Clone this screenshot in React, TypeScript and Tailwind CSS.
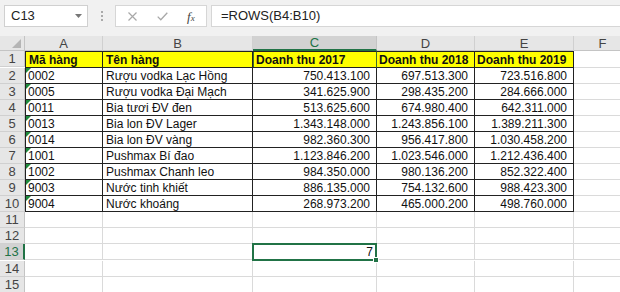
import React from 'react'

const rows = [
  ['0002', 'Rượu vodka Lạc Hồng', '750.413.100', '697.513.300', '723.516.800'],
  ['0005', 'Rượu vodka Đại Mạch', '341.625.900', '298.435.200', '284.666.000'],
  ['0011', 'Bia tươi ĐV đen', '513.625.600', '674.980.400', '642.311.000'],
  ['0013', 'Bia lon ĐV Lager', '1.343.148.000', '1.243.856.100', '1.389.211.300'],
  ['0014', 'Bia lon ĐV vàng', '982.360.300', '956.417.800', '1.030.458.200'],
  ['1001', 'Pushmax Bí đao', '1.123.846.200', '1.023.546.000', '1.212.436.400'],
  ['1002', 'Pushmax Chanh leo', '984.350.000', '980.136.200', '852.322.400'],
  ['9003', 'Nước tinh khiết', '886.135.000', '754.132.600', '988.423.300'],
  ['9004', 'Nước khoáng', '268.973.200', '465.000.200', '498.760.000'],
]

const cols = ['A', 'B', 'C', 'D', 'E', 'F']
const grid = 'grid grid-cols-[25px_78px_150px_124px_98px_99px_58px]'

function RowHead({ n, active }: { n: number; active?: boolean }) {
  return (
    <div
      className={
        active
          ? 'h-[16px] bg-[#d2d2d2] border-r-2 border-r-[#217346] border-b border-b-[#d0d0d0] flex items-center justify-center text-[13px] leading-none text-[#217346]'
          : 'h-[16px] bg-[#e6e6e6] border-r border-r-[#c4c4c4] border-b border-b-[#d0d0d0] flex items-center justify-center text-[13px] leading-none text-[#444]'
      }
    >
      {n}
    </div>
  )
}

function Blank() {
  return <div className="h-[16px] border-r border-b border-[#dadada]" />
}

export default function App() {
  return (
    <div className="w-[620px] h-[292px] overflow-hidden bg-white font-['Liberation_Sans',Arial,sans-serif] text-[#111]">
      {/* formula bar */}
      <div className="h-[36px] bg-[#f1f1f1] flex items-start pt-[5px]">
        <div className="ml-[4px] w-[84px] h-[22px] bg-white border border-[#d0d0d0] flex items-center justify-between pl-[6px] pr-[5px]">
          <span className="text-[13px] text-[#222]">C13</span>
          <svg width="7" height="4" viewBox="0 0 7 4"><polygon points="0,0 7,0 3.5,4" fill="#777" /></svg>
        </div>
        <div className="ml-[13px] mt-[6px] flex flex-col gap-[2px]">
          <span className="w-[2px] h-[2px] bg-[#aaa]" />
          <span className="w-[2px] h-[2px] bg-[#aaa]" />
          <span className="w-[2px] h-[2px] bg-[#aaa]" />
        </div>
        <div className="ml-[12px] w-[92px] h-[22px] bg-white border border-[#d6d6d6] flex items-center">
          <svg className="ml-[12px]" width="9" height="9" viewBox="0 0 9 9">
            <path d="M0.5 0.5L8.5 8.5M8.5 0.5L0.5 8.5" stroke="#a8a8a8" strokeWidth="1.2" />
          </svg>
          <svg className="ml-[20px]" width="11" height="9" viewBox="0 0 11 9">
            <path d="M0.7 4.6L3.8 7.8L10.3 0.8" stroke="#a8a8a8" strokeWidth="1.3" fill="none" />
          </svg>
          <span className="ml-[19px] font-['Liberation_Serif',serif] italic text-[13px] text-[#444] leading-none">
            f<span className="text-[9px]">x</span>
          </span>
        </div>
        <div className="ml-[4px] flex-1 h-[22px] bg-white border border-r-0 border-[#d6d6d6] flex items-center pl-[9px]">
          <span className="text-[13px] text-[#222]">=ROWS(B4:B10)</span>
        </div>
      </div>

      {/* column headers */}
      <div className={grid}>
        <div className="h-[15px] bg-[#e6e6e6] border-r border-b border-[#c4c4c4] flex items-end justify-end pr-[3px] pb-[2px]">
          <svg width="9" height="9" viewBox="0 0 9 9"><polygon points="9,0 9,9 0,9" fill="#b5b5b5" /></svg>
        </div>
        {cols.map((c) =>
          c === 'C' ? (
            <div key={c} className="h-[15px] bg-[#d2d2d2] border-r border-r-[#c4c4c4] border-b-2 border-b-[#217346] flex items-center justify-center text-[13px] leading-none text-[#217346]">
              {c}
            </div>
          ) : (
            <div key={c} className="h-[15px] bg-[#e6e6e6] border-r border-r-[#d0d0d0] border-b border-b-[#c4c4c4] flex items-center justify-center text-[13px] leading-none text-[#444]">
              {c}
            </div>
          )
        )}
      </div>

      {/* row 1 */}
      <div className={grid}>
        <RowHead n={1} />
        <div className="h-[17px] bg-[#ffff00] border border-[#222] px-[3px] flex items-center text-[12px] font-bold">Mã hàng</div>
        <div className="h-[17px] bg-[#ffff00] border-y border-r border-[#222] px-[3px] flex items-center text-[12px] font-bold">Tên hàng</div>
        <div className="h-[17px] bg-[#ffff00] border-y border-r border-y-[#222] border-r-[#3d6b2f] shadow-[inset_1px_0_0_#3d6b2f] px-[3px] flex items-center text-[12px] font-bold">Doanh thu 2017</div>
        <div className="h-[17px] bg-[#ffff00] border-y border-r border-[#222] px-[2px] flex items-center text-[12px] font-bold">Doanh thu 2018</div>
        <div className="h-[17px] bg-[#ffff00] border-y border-r border-[#222] px-[2px] flex items-center text-[12px] font-bold">Doanh thu 2019</div>
        <div className="h-[17px] border-r border-b border-[#dadada]" />
      </div>

      {/* data rows */}
      {rows.map((r, i) => (
        <div key={r[0]} className={grid}>
          <RowHead n={i + 2} />
          <div className="relative h-[16px] border-l border-r border-b border-[#222] px-[2px] flex items-center text-[12px]">
            <span className="absolute top-0 left-0 w-0 h-0 border-t-[5px] border-r-[5px] border-t-[#1f8a3c] border-r-transparent" />
            {r[0]}
          </div>
          <div className="h-[16px] border-r border-b border-[#222] px-[3px] flex items-center text-[12px]">{r[1]}</div>
          <div className="h-[16px] border-r border-b border-[#222] pr-[6px] flex items-center justify-end text-[12px]">{r[2]}</div>
          <div className="h-[16px] border-r border-b border-[#222] pr-[6px] flex items-center justify-end text-[12px]">{r[3]}</div>
          <div className="h-[16px] border-r border-b border-[#222] pr-[6px] flex items-center justify-end text-[12px]">{r[4]}</div>
          <Blank />
        </div>
      ))}

      {/* empty rows */}
      {[11, 12, 13, 14, 15].map((n) => (
        <div key={n} className={grid}>
          <RowHead n={n} active={n === 13} />
          <Blank />
          <Blank />
          {n === 13 ? (
            <div className="relative h-[17px] border-r border-b border-[#dadada] pr-[3px] flex items-center justify-end text-[12px]">
              7
              <span className="absolute -top-[1px] -left-[1px] -right-[1px] -bottom-[1px] border-2 border-[#217346]" />
              <span className="absolute -right-[3px] -bottom-[3px] w-[6px] h-[6px] bg-[#217346] border border-white" />
            </div>
          ) : (
            <Blank />
          )}
          <Blank />
          <Blank />
          <Blank />
        </div>
      ))}
    </div>
  )
}
